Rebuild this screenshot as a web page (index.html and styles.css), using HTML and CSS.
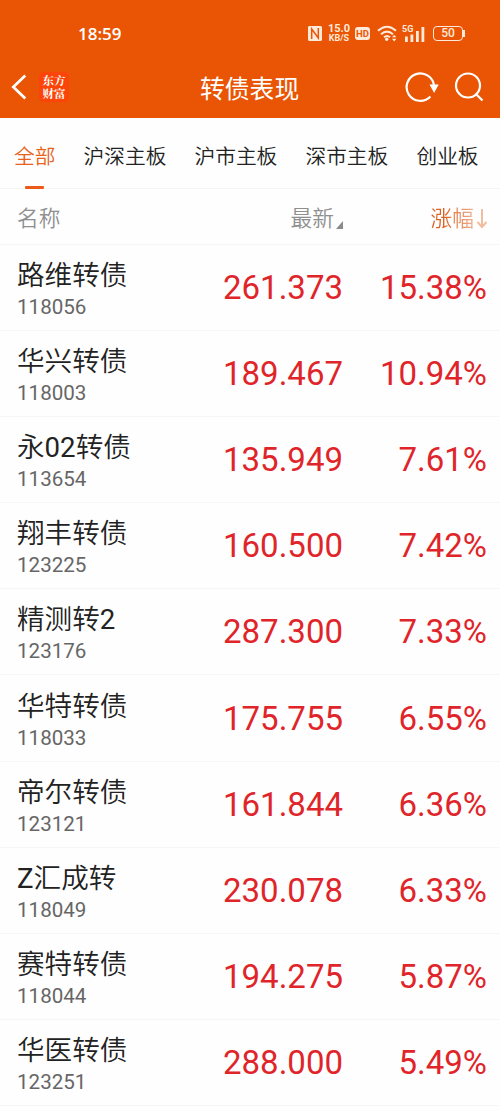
FILE: index.html
```
<!DOCTYPE html>
<html lang="zh-CN">
<head>
<meta charset="utf-8">
<title>转债表现</title>
<link rel="stylesheet" href="styles.css">
</head>
<body>
<header class="top">
  <div class="status">
    <span class="clock">18:59</span>
    <div class="status-icons">
      <svg class="nfc" width="14" height="15" viewBox="0 0 14 15"><path d="M2 0h10.500a1.500 1.500 0 0 1 1.500 1.500v12a1.500 1.500 0 0 1-1.500 1.500H1.500A1.500 1.500 0 0 1 0 13.500V1.500A1.500 1.500 0 0 1 2 0z" fill="#ffe9d9"/><path d="M3.700 13V3l6.600 9V2" fill="none" stroke="#e95504" stroke-width="1.500"/></svg>
      <span class="speed"><b>15.0</b><i>KB/S</i></span>
      <span class="hd">HD</span>
      <svg class="wifi" width="21" height="17" viewBox="0 0 21 17"><g fill="none" stroke="#ffe9d9" stroke-width="2"><path d="M1 5.800q9-8 18 0M4 9.300q6-5.300 12 0M7 12.300q3-2.700 6 0"/></g><circle cx="9.700" cy="14.300" r="1.700" fill="#ffe9d9"/><path d="M15 12.300l2.200-2.600 2.200 2.600zM15 13.800l2.200 2.600 2.200-2.600z" fill="#ffe9d9"/></svg>
      <span class="signal"><em>5G</em><svg width="22" height="16" viewBox="0 0 22 16"><path d="M2 10.500h2.800V16H2zM7.500 8.500h2.800V16H7.500zM13 5h2.800v11H13zM18.500 1h2.800v15h-2.800z" fill="#ffe9d9"/></svg></span>
      <span class="battery">50</span>
    </div>
  </div>
  <div class="nav">
    <svg class="back" width="16" height="26" viewBox="0 0 16 26"><path d="M14.300 1.500L2.300 13l12 11.500" fill="none" stroke="#fff" stroke-width="2.700"/></svg>
    <span class="logo"><span>东方</span><span>财富</span></span>
    <h1>转债表现</h1>
    <svg class="refresh" width="34" height="32" viewBox="0 0 34 32"><path d="M25.400 25.400A13.700 13.700 0 1 1 29 15" fill="none" stroke="#fff" stroke-width="2.200"/><path d="M24.500 13.500h9.200l-4.600 8.500z" fill="#fff"/></svg>
    <svg class="search" width="30" height="30" viewBox="0 0 30 30"><g fill="none" stroke="#fff" stroke-width="2.200"><circle cx="14" cy="13.500" r="12"/><path d="M21.500 21.500l7 7"/></g></svg>
  </div>
</header>

<nav class="tabs">
  <span class="tab active">全部</span>
  <span class="tab">沪深主板</span>
  <span class="tab">沪市主板</span>
  <span class="tab">深市主板</span>
  <span class="tab">创业板</span>
</nav>

<div class="head">
  <span class="head-name">名称</span>
  <span class="head-price">最新<svg width="7" height="8" viewBox="0 0 7 8"><path d="M7 0v8H0z" fill="#8a8a8a"/></svg></span>
  <span class="head-change"><span class="sort">涨幅</span><svg width="12" height="22" viewBox="0 0 12 22"><path d="M6 1v18M1.500 14L6 19l4.500-5" fill="none" stroke="#f2bd9f" stroke-width="2"/></svg></span>
</div>

<main class="list">
  <div class="row">
    <div class="bond"><span class="name">路维转债</span><span class="code">118056</span></div>
    <span class="price">261.373</span><span class="change">15.38%</span>
  </div>
  <div class="row">
    <div class="bond"><span class="name">华兴转债</span><span class="code">118003</span></div>
    <span class="price">189.467</span><span class="change">10.94%</span>
  </div>
  <div class="row">
    <div class="bond"><span class="name">永<span class="latin">02</span>转债</span><span class="code">113654</span></div>
    <span class="price">135.949</span><span class="change">7.61%</span>
  </div>
  <div class="row">
    <div class="bond"><span class="name">翔丰转债</span><span class="code">123225</span></div>
    <span class="price">160.500</span><span class="change">7.42%</span>
  </div>
  <div class="row">
    <div class="bond"><span class="name">精测转<span class="latin">2</span></span><span class="code">123176</span></div>
    <span class="price">287.300</span><span class="change">7.33%</span>
  </div>
  <div class="row">
    <div class="bond"><span class="name">华特转债</span><span class="code">118033</span></div>
    <span class="price">175.755</span><span class="change">6.55%</span>
  </div>
  <div class="row">
    <div class="bond"><span class="name">帝尔转债</span><span class="code">123121</span></div>
    <span class="price">161.844</span><span class="change">6.36%</span>
  </div>
  <div class="row">
    <div class="bond"><span class="name"><span class="latin">Z</span>汇成转</span><span class="code">118049</span></div>
    <span class="price">230.078</span><span class="change">6.33%</span>
  </div>
  <div class="row">
    <div class="bond"><span class="name">赛特转债</span><span class="code">118044</span></div>
    <span class="price">194.275</span><span class="change">5.87%</span>
  </div>
  <div class="row">
    <div class="bond"><span class="name">华医转债</span><span class="code">123251</span></div>
    <span class="price">288.000</span><span class="change">5.49%</span>
  </div>
</main>
</body>
</html>
```

FILE: styles.css
```
* { box-sizing: border-box; }
body { margin: 0; height: 1111px; overflow: hidden; background: #fefefe; color: #222; font-family: Roboto, "Noto Sans CJK SC", sans-serif; }
svg { display: block; flex: none; }

.top { height: 118px; background: #e95504; color: #fff; }
.status { display: flex; justify-content: space-between; height: 58px; padding: 9px 37px 0 78px; align-items: center; }
.clock { font: 600 17px/20px "Open Sans", sans-serif; }
.status-icons { display: flex; align-items: center; color: #ffe9d9; }
.speed { display: flex; flex-direction: column; align-items: center; width: 22px; margin: 0 5px 0 6px; }
.speed b { font: 700 11px/10px Roboto, sans-serif; }
.speed i { font: 700 9px/9px Roboto, sans-serif; }
.hd { width: 15px; height: 13px; margin-right: 7px; border-radius: 3px; background: #ffe9d9; color: #e95504; font: 700 9.5px/13px Roboto, sans-serif; text-align: center; }
.signal { position: relative; margin: 0 8px 0 5px; }
.signal em { position: absolute; left: -1px; top: -1px; background: #e95504; font: 700 9px/9px Roboto, sans-serif; }
.battery { width: 30px; height: 15px; border: 1px solid #ffe9d9; border-radius: 4px; font: 500 12px/13px Roboto, sans-serif; text-align: center; position: relative; }
.battery::after { content: ""; position: absolute; right: -3px; top: 3px; width: 2px; height: 7px; background: #ffe9d9; }

.nav { display: flex; align-items: center; height: 58px; padding: 0 16px 0 11px; }
.logo { display: flex; flex-direction: column; width: 30px; height: 30px; margin-left: 12px; border-radius: 5px; background: #fb4408; font: 700 11.5px/13px "Noto Serif CJK SC", "Noto Sans CJK SC", sans-serif; text-align: center; padding-top: 2px; }
.nav h1 { flex: 1; margin: 6px 0 0 131px; font-size: 24.8px; font-weight: 400; line-height: 36px; }
.search { margin-left: 15px; }

.tabs { display: flex; gap: 28.2px; height: 71px; padding: 0 14px; border-bottom: 1px solid #f5f5f5; font-size: 20.7px; line-height: 79px; white-space: nowrap; font-weight: 350; }
.tab { position: relative; flex: none; }
.active { color: #e8621b; }
.active::after { content: ""; position: absolute; left: 11px; top: 67.500px; width: 19px; height: 3px; border-radius: 1px; background: #ec5a1a; }

.head { display: flex; height: 56px; padding: 0 12px 0 17px; border-bottom: 1px solid #f6f6f6; font-size: 21.7px; line-height: 59px; color: #8f8f8f; font-weight: 350; }
.head-name { flex: 1; }
.head-price { display: flex; align-items: center; padding-top: 4px; }
.head-price svg { margin: 12px 0 0 2px; }
.head-change { display: flex; align-items: center; justify-content: flex-end; width: 145px; padding-top: 4px; }
.sort { background: linear-gradient(90deg, #dd6122 30%, #f0b292); -webkit-background-clip: text; background-clip: text; color: transparent; }
.head-change svg { margin: 0 0 0 2px; }

.row { display: flex; align-items: center; height: 86.1px; padding: 1px 13px 0 17px; border-bottom: 1px solid #f6f6f6; }
.bond { display: flex; flex: 1; flex-direction: column; padding-top: 4px; }
.name { font-size: 27.6px; line-height: 34px; font-weight: 350; }
.latin { font-weight: 400; }
.code { font-size: 20.6px; line-height: 28px; color: #666; }
.price, .change { color: #e0252a; font-size: 33px; line-height: 40px; text-align: right; }
.change { width: 144px; }
```
